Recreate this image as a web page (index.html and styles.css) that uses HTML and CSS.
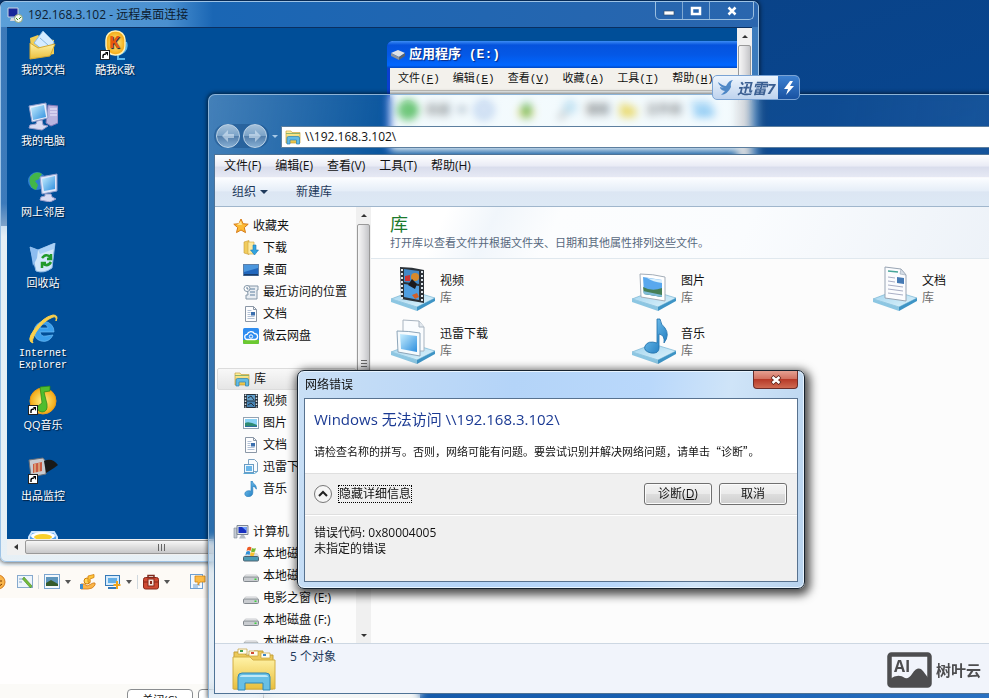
FILE: index.html
```html
<!DOCTYPE html>
<html lang="zh-CN">

<head>
    <meta charset="UTF-8">
    <meta name="viewport" content="width=device-width, initial-scale=1.0">
    <title>网络错误</title>
    <link rel="stylesheet" href="styles.css">
</head>

<body>
    <!-- 图标 -->
    <svg class="defs" aria-hidden="true">
        <defs>
            <linearGradient id="g-glass" x1="0" y1="0" x2="1" y2="1">
                <stop offset="0" stop-color="#c8efff" />
                <stop offset="1" stop-color="#2d8ede" />
            </linearGradient>
            <linearGradient id="g-folder" x1="0" y1="0" x2="0" y2="1">
                <stop offset="0" stop-color="#fff3a8" />
                <stop offset="1" stop-color="#e9bf3d" />
            </linearGradient>
            <linearGradient id="g-stand" x1="0" y1="0" x2="1" y2="1">
                <stop offset="0" stop-color="#9fd3ee" />
                <stop offset="1" stop-color="#dff3fb" />
            </linearGradient>
            <linearGradient id="g-note" x1="0" y1="0" x2="1" y2="1">
                <stop offset="0" stop-color="#8ad4fa" />
                <stop offset="1" stop-color="#1270b8" />
            </linearGradient>
            <radialGradient id="g-gold">
                <stop offset="0" stop-color="#fff38a" />
                <stop offset="1" stop-color="#f3a813" />
            </radialGradient>
        </defs>
        <symbol id="shortcut" viewBox="0 0 10 10">
            <rect x=".5" y=".5" width="9" height="9" fill="#fff" stroke="#222" />
            <path d="M3 8V6q0-2 3-2" fill="none" stroke="#000" stroke-width="1.4" />
            <path d="M5 2h3v4z" />
        </symbol>
        <symbol id="star" viewBox="0 0 16 16">
            <path d="M8 1l2.1 4.7 5.1.5-3.9 3.4 1.2 5L8 12l-4.5 2.6 1.2-5L.8 6.2l5.1-.5z" fill="#fdbb35" stroke="#d67a16" />
            <path d="M8 3l1 4-5 0z" fill="#ffe28a" />
        </symbol>
        <symbol id="download" viewBox="0 0 16 16">
            <path d="M1 2l5-1.500v14L1 13z" fill="#f1cc5d" stroke="#c89b35" stroke-width=".6" />
            <path d="M5 2h6v12H5z" fill="#fdeaa0" stroke="#d0a43a" stroke-width=".6" />
            <path d="M10 5h3v5h2.500L11.500 15 7.500 10H10z" fill="#31a3df" stroke="#1b78b5" stroke-width=".6" />
        </symbol>
        <symbol id="desktop" viewBox="0 0 16 16">
            <rect x=".5" y="2.500" width="15" height="11" fill="#2167bd" stroke="#5c7fa8" />
            <path d="M1 3h14v3L1 10z" fill="#4b96dd" />
            <rect x="1" y="12" width="14" height="1.500" fill="#173d6d" />
        </symbol>
        <symbol id="recent" viewBox="0 0 16 16">
            <path d="M4 2h11v4h-1v9H3v-4h2z" fill="#e8edf2" stroke="#8597a8" />
            <path d="M7 5h5M7 8h5M7 11h5" stroke="#5c7f9e" />
            <circle cx="4" cy="4.500" r="3" fill="#fff" stroke="#8597a8" />
            <path d="M4 3v2h1.500" fill="none" stroke="#3d5f80" stroke-width=".8" />
        </symbol>
        <symbol id="doc" viewBox="0 0 16 16">
            <path d="M2.500.500h8l3 3v12h-11z" fill="#fdfdfe" stroke="#8b97a6" />
            <path d="M10.500.500v3h3" fill="none" stroke="#8b97a6" />
            <path d="M4.500 4.500h4M4.500 6.500h3M4.500 8.500h3M4.500 10.500h7M4.500 12.500h7" stroke="#b3c2d6" />
            <rect x="8" y="6" width="4" height="3.500" fill="#3b6fae" />
        </symbol>
        <symbol id="cloud" viewBox="0 0 16 16">
            <rect width="16" height="16" rx="1.500" fill="#2f8df0" />
            <path d="M0 12h16v2.500a1.500 1.500 0 0 1-1.500 1.500h-13A1.500 1.500 0 0 1 0 14.500z" fill="#6cc931" />
            <path d="M4.500 11.500a2.600 2.600 0 0 1-.3-5.200 4 4 0 0 1 7.300-.6 2.900 2.900 0 0 1 .3 5.800z" fill="none" stroke="#fff" stroke-width="1.300" />
            <circle cx="8" cy="8.500" r="1.700" fill="none" stroke="#fff" />
        </symbol>
        <symbol id="library" viewBox="0 0 16 16">
            <path d="M1 2h5l1 1.500h8V14H1z" fill="url(#g-folder)" stroke="#c9a23b" stroke-width=".7" />
            <path d="M1 4.500h14" stroke="#8fb36b" />
            <path d="M2 15V9q0-1.500 1.500-1.500h9.500q1.500 0 1.500 1.500v6h-3v-4H5v4z" fill="#62bbe5" stroke="#2b82b4" stroke-width=".7" />
        </symbol>
        <symbol id="film" viewBox="0 0 16 16">
            <rect x="1" y="1" width="14" height="14" fill="#26323d" />
            <rect x="4" y="2" width="8" height="5.500" fill="#5f9ecb" />
            <rect x="4" y="8.500" width="8" height="5.500" fill="#4683b3" />
            <path d="M2.500 1.500v13M13.500 1.500v13" stroke="#d8e1e8" stroke-width="1.500" stroke-dasharray="1.500 1.500" />
            <path d="M5 5l3-2 3 4M5 12l3-2 3 3" stroke="#26323d" fill="none" />
        </symbol>
        <symbol id="picture" viewBox="0 0 16 16">
            <rect x=".5" y="2.500" width="15" height="11" fill="#fff" stroke="#93a3b3" />
            <rect x="2" y="4" width="12" height="8" fill="#8ad2f5" />
            <path d="M2 8q4-2 12 2v2H2z" fill="#2f8b73" />
            <path d="M2 11h12v1H2z" fill="#2f6ca0" />
        </symbol>
        <symbol id="xunlei" viewBox="0 0 16 16">
            <path d="M5.500.500h6l3 3v9h-9z" fill="#f7fbfe" stroke="#7ea3c2" />
            <rect x="1.500" y="5.500" width="9" height="8" fill="#eef8fe" stroke="#6a9cc4" />
            <rect x="3" y="7" width="6" height="5" fill="#6ab6ea" />
            <path d="M.5 14.500h11l3-2" fill="none" stroke="#5caad6" />
        </symbol>
        <symbol id="music" viewBox="0 0 16 16">
            <path d="M8 0h1.300c.3 2.700 4.700 3.600 4 8.200-.7-2-2.200-2.700-3.500-2.800v6.300c0 5-7.800 5.100-8 1.400C1.700 10 5.500 9 8 10.200z" fill="url(#g-note)" stroke="#2279bb" stroke-width=".6" />
        </symbol>
        <symbol id="pc" viewBox="0 0 16 16">
            <path d="M1 4h3v10H1z" fill="#c5cbd3" stroke="#7d8794" stroke-width=".6" />
            <path d="M4 1.500h11v9H4z" fill="#dfe4ea" stroke="#7d8794" />
            <path d="M5.500 3h8v6h-8z" fill="#1931c0" />
            <path d="M9 3h4.500v4z" fill="#6ea0ff" />
            <path d="M8 11h3l2 3.500H6z" fill="#b4bcc6" />
        </symbol>
        <symbol id="disk" viewBox="0 0 16 16">
            <path d="M2.500 7h11l2 2.500h-15z" fill="#f2f3f4" stroke="#a9adb2" stroke-width=".6" />
            <rect x=".5" y="9" width="15" height="4.500" rx="1" fill="#c9ccd0" stroke="#82888e" />
            <rect x="11.500" y="10.500" width="2" height="1.500" fill="#3ccf3c" />
        </symbol>
        <symbol id="sysdisk" viewBox="0 0 16 16">
            <rect x=".5" y="10.500" width="15" height="4.500" rx="1" fill="#4c9bb5" stroke="#4c6270" />
            <path d="M1 10l3-3h10l2 3z" fill="#d6dadd" />
            <path d="M4.500 1.500q2-1.500 4 0l-1 3.500q-2-1.300-4 0z" fill="#ee5a24" />
            <path d="M9 2q2 1 4 0l-1 3.500q-2 1-4 0z" fill="#79b72e" />
            <path d="M3.300 5.700q2-1.300 4 0L6.500 9q-2-1.300-4 0z" fill="#2f90d8" />
            <path d="M7.800 6q2 1 4 0L11 9.500q-2 1-4 0z" fill="#fbc02d" />
        </symbol>
        <symbol id="stand" viewBox="0 0 46 46">
            <path d="M1 34l21-8 23 7-18 9z" fill="url(#g-stand)" stroke="#79b5d3" stroke-width=".7" />
            <path d="M1 34l26 8v4L1 37z" fill="#8cc6e2" />
            <path d="M27 42l18-9v3l-18 10z" fill="#3e94c5" />
        </symbol>
    </svg>

    <div class="desktop">
        <!-- 聊天窗口 -->
        <section class="chat">
            <div class="chat-tools">
                <svg class="i16 cut" viewBox="0 0 16 16"><circle cx="7" cy="8" r="7" fill="#f8b44a" stroke="#d47a1a" /><path d="M7 6v2M10 6v2M6 11q3 2 5-1" stroke="#7c3b00" fill="none" /></svg>
                <svg class="i16" viewBox="0 0 16 16"><rect x=".5" y="1.500" width="15" height="12" fill="#eef5fb" stroke="#86a9cd" /><path d="M2 5h4M2 8h3" stroke="#86a9cd" /><path d="M7 3l8 9-1.500 2L5.500 5z" fill="#73bd3b" stroke="#437f22" stroke-width=".6" /></svg>
                <i class="sep"></i>
                <svg class="i16" viewBox="0 0 16 16"><rect x=".5" y=".5" width="15" height="14" fill="#f3f8fd" stroke="#7ba5cf" /><rect x="2" y="3" width="12" height="9" fill="#5d95bc" /><path d="M2 9l5-3 7 4v2H2z" fill="#355c2c" /></svg>
                <i class="caret"></i>
                <svg class="i16 wide" viewBox="0 0 16 16"><circle cx="7" cy="7" r="3" fill="#ffd65a" stroke="#d07f0c" /><path d="M8 8V2l6-1.500v3L10 5v4z" fill="#ffc53b" stroke="#d07f0c" stroke-width=".8" /><path d="M1 10q4-1 6 2l6-3q3-1 2 2-2 4-7 4H1z" fill="#fbb548" stroke="#cf7a16" stroke-width=".8" /><path d="M0 10h3v5H0z" fill="#3b8bd0" /></svg>
                <svg class="i16" viewBox="0 0 16 16"><rect x=".5" y="1.500" width="14" height="10" fill="#d7ebfb" stroke="#3579b8" /><rect x="3" y="4" width="9" height="5" fill="#63aee6" /><path d="M3 14h8" stroke="#3579b8" stroke-width="2" /><path d="M12 7v8M8.500 11h7" stroke="#f0a51c" stroke-width="2" /></svg>
                <i class="caret"></i>
                <i class="sep"></i>
                <svg class="i16" viewBox="0 0 16 16"><path d="M5 4V1.500h6V4" fill="none" stroke="#7c2a1d" stroke-width="1.500" /><rect x=".5" y="3.500" width="15" height="11.500" rx="2" fill="#cf4a33" stroke="#87281a" /><path d="M1 8h14" stroke="#87281a" /><rect x="5" y="5" width="6" height="7" fill="#f4e3db" stroke="#87281a" /><rect x="7" y="7" width="2" height="3" fill="#87281a" /></svg>
                <i class="caret"></i>
                <svg class="i16 far" viewBox="0 0 16 16"><rect x=".5" y=".5" width="12" height="14" fill="#f3f8fd" stroke="#6ea0d3" /><path d="M3 11h7M3 13h5" stroke="#6ea0d3" /><path d="M5 2h10v6h-5l-2 3V8H5z" fill="#fdbb45" stroke="#cf8518" stroke-width=".8" /></svg>
            </div>
            <div class="chat-input"></div>
            <div class="chat-foot">
                <button class="chat-btn">关闭(C)</button>
                <button class="chat-btn" aria-label="发送"></button>
            </div>
        </section>

        <!-- 远程桌面 -->
        <section class="remote">
            <header class="remote-title">
                <svg class="i16" viewBox="0 0 16 16"><path d="M1 1h10v9H1z" fill="#16279a" stroke="#c9d4e3" /><path d="M4 11h5l1 3H3z" fill="#cfd6df" /><circle cx="11.500" cy="11.500" r="4" fill="#f3f8ee" stroke="#8aa37a" /><path d="M9 11l2 2M14 10l-2 2" stroke="#3c8c20" /></svg>
                <h1>192.168.3.102 - 远程桌面连接</h1>
                <div class="caption">
                    <button aria-label="最小化"><svg viewBox="0 0 12 12"><rect x="1" y="6" width="10" height="4" fill="#fff" stroke="#35506f" stroke-width=".7" /></svg></button>
                    <button aria-label="最大化"><svg viewBox="0 0 12 12"><rect x="2" y="3" width="8" height="6" fill="none" stroke="#fff" stroke-width="2.500" /></svg></button>
                    <button class="x" aria-label="关闭"><svg viewBox="0 0 12 12"><path d="M2.500 2.500l7 7M9.500 2.500l-7 7" stroke="#fff" stroke-width="2.500" /></svg></button>
                </div>
            </header>
            <div class="remote-body">
                <div class="screen">
                    <ul class="icons">
                        <li>
                            <svg viewBox="0 0 30 30"><path d="M2 8l8-3 3 3 13 2v14L4 29z" fill="#f2cf55" /><path d="M6 13L15 1l11 11-6 12z" fill="#d5ecff" stroke="#8ab8e0" /><path d="M12 8l8 7" stroke="#8ab8e0" /><path d="M2 29V13l8 5 17-4-5 12z" fill="url(#g-folder)" stroke="#d3a933" /></svg>
                            <span>我的文档</span>
                        </li>
                        <li>
                            <svg viewBox="0 0 30 30"><path d="M20 4l10 1v17l-7 3-5-3z" fill="#b9b4df" stroke="#8178b8" /><path d="M22 8h7M22 11h7M22 14h7" stroke="#eef" /><path d="M1 5l17-3 2 15-16 4z" fill="#e7ecfb" stroke="#8e9dcb" /><path d="M3 7l13-3 2 12-13 3z" fill="url(#g-glass)" /><path d="M9 20l5-1 1 5 5 1-6 4-13-2 1-3 6-1z" fill="#d9dbf3" stroke="#9a9ecc" /></svg>
                            <span>我的电脑</span>
                        </li>
                        <li>
                            <svg viewBox="0 0 30 30"><circle cx="9" cy="9" r="9" fill="#2f7fd0" /><path d="M2 5q6-7 12-3l-3 5-4 2 3 4-2 5Q0 15 2 5z" fill="#42b649" /><path d="M12 5l17-3v17l-15 3z" fill="#dfe6fa" stroke="#8e9dcb" /><path d="M14 7l13-3v13l-11 2z" fill="url(#g-glass)" /><path d="M17 22h6l1 3 4 2-6 3-10-2 1-3 4-1z" fill="#d9dbf3" stroke="#9a9ecc" /></svg>
                            <span>网上邻居</span>
                        </li>
                        <li>
                            <svg viewBox="0 0 30 30"><path d="M2 4l8 3 17-7-3 25q-8 6-16 3z" fill="#d2e8fb" stroke="#8fb9e4" /><path d="M2 4l8 3-1 8-4 8z" fill="#8dbdf0" /><path d="M10 7l17-7-1 6-14 5z" fill="#a9d0f7" /><path d="M14 15q4-5 8-1M23 11v5h-4M23 19q-3 5-8 2M14 25v-5h4" fill="none" stroke="#219a2a" stroke-width="2.500" /></svg>
                            <span>回收站</span>
                        </li>
                        <li>
                            <svg viewBox="0 0 30 30"><path d="M6 17A10 10 0 1 1 26 18H12q1 5 6 4l7-1q-4 8-12 6-7-2-7-10zM12 14h8q-1-4-4-4t-4 4z" fill="#3b9fec" stroke="#6bbcf7" stroke-width=".7" fill-rule="evenodd" /><path d="M5 29Q-2 27 6 16 15 3 25 1q6 0 3 6 1-5-3-4Q15 7 8 18q-5 9-3 11z" fill="#fbd04c" stroke="#fbd04c" stroke-width="1" /></svg>
                            <span class="en">Internet Explorer</span>
                        </li>
                        <li>
                            <svg viewBox="0 0 30 30"><circle cx="15" cy="16" r="13" fill="url(#g-gold)" stroke="#eb9b1a" /><path d="M12 2l10-1v5l-6 1 3 12q1 8-5 8-6-1-4-6l4-3z" fill="#4fbd2f" stroke="#278416" stroke-width=".7" /><use href="#shortcut" x="0" y="20" width="10" height="10" /></svg>
                            <span>QQ音乐</span>
                        </li>
                        <li>
                            <svg viewBox="0 0 30 30"><path d="M1 4l14-2 3 4v12l-15 3z" fill="#c9cbd0" stroke="#6d7178" /><path d="M5 8l9-2v9l-9 2z" fill="#c95b42" /><path d="M7 8v9M11 7v9" stroke="#ebd7a3" /><path d="M16 5q8-4 14 4l-4 3-8 5z" fill="#191919" /><use href="#shortcut" x="0" y="18" width="10" height="10" /></svg>
                            <span>出品监控</span>
                        </li>
                        <li>
                            <svg viewBox="0 0 30 30"><path d="M1 10l3-5h22l3 5v20H1z" fill="#4fa0f0" stroke="#c9e4ff" stroke-width="2" /><ellipse cx="15" cy="9" rx="12" ry="4" fill="#fff" /><ellipse cx="15" cy="10" rx="9" ry="3" fill="#f7cf2d" /></svg>
                        </li>
                    </ul>
                    <ul class="icons">
                        <li>
                            <svg viewBox="0 0 30 30"><path d="M26 12q3 9-8 13v4h7" fill="none" stroke="#58b7ef" stroke-width="2" /><rect x="6" y="1" width="19" height="24" rx="9" fill="url(#g-gold)" stroke="#fff1b5" stroke-width="1.500" /><text x="9" y="18" class="k">K</text><use href="#shortcut" x="0" y="20" width="10" height="10" /></svg>
                            <span>酷我K歌</span>
                        </li>
                    </ul>
                    <div class="xp">
                        <div class="xp-title">
                            <svg class="i16" viewBox="0 0 16 16"><path d="M1 6l7-3 7 3-6 4z" fill="#dfe3e6" /><path d="M1 6l8 4v3L1 9z" fill="#8b9299" /><path d="M9 10l6-4v3l-6 4z" fill="#5c646b" /></svg>
                            <h2>应用程序 (E:)</h2>
                        </div>
                        <nav class="xp-menu">
                            <span>文件(<u>F</u>)</span>
                            <span>编辑(<u>E</u>)</span>
                            <span>查看(<u>V</u>)</span>
                            <span>收藏(<u>A</u>)</span>
                            <span>工具(<u>T</u>)</span>
                            <span>帮助(<u>H</u>)</span>
                        </nav>
                        <div class="xp-tools">
                            <svg class="i20" viewBox="0 0 20 20"><circle cx="10" cy="10" r="10" fill="#46b94c" /><path d="M12 5l-5 5 5 5" fill="none" stroke="#fff" stroke-width="2" /></svg>
                            <span>后退</span>
                            <i class="caret"></i>
                            <svg class="i20" viewBox="0 0 20 20"><circle cx="10" cy="10" r="8" fill="#e9f1fb" stroke="#a5c0e8" stroke-width="3" /></svg>
                            <svg class="i20 up-folder" viewBox="0 0 20 20"><path d="M3 8h14v9H3z" fill="#e5d86a" /><path d="M8 18V9H5l6-7 5 7h-3v9z" fill="#4fae42" /></svg>
                            <svg class="i20" viewBox="0 0 20 20"><circle cx="12" cy="7" r="6" fill="#c8e8f7" stroke="#9ccbe2" /><path d="M8 11l-7 8" stroke="#888" stroke-width="2" /></svg>
                            <span>搜索</span>
                            <svg class="i20" viewBox="0 0 20 20"><path d="M2 4h7l2 3h7v10H2z" fill="#f1dc62" /></svg>
                            <span>文件夹</span>
                            <svg class="i26" viewBox="0 0 26 20"><path d="M1 2h20v4H1zM4 8h20v9H4z" fill="#8ecbf5" /></svg>
                        </div>
                    </div>
                </div>
                <div class="vscroll"><i class="up"></i><b></b></div>
            </div>
            <div class="hscroll"><i class="left"></i><b><em></em></b></div>
        </section>

        <!-- 资源管理器 -->
        <section class="explorer">
            <div class="address">
                <div class="nav-btns">
                    <button aria-label="后退"><svg viewBox="0 0 22 22"><path d="M11 5l-6 6 6 6v-4h6V9h-6z" fill="#d9e8f5" opacity=".6" /></svg></button>
                    <button aria-label="前进"><svg viewBox="0 0 22 22"><path d="M11 5l6 6-6 6v-4H5V9h6z" fill="#d9e8f5" opacity=".6" /></svg></button>
                </div>
                <i class="caret light"></i>
                <div class="addr-box">
                    <svg class="i16"><use href="#library" /></svg>
                    <input type="text" aria-label="地址" value="\\192.168.3.102\">
                </div>
            </div>
            <div class="client">
                <nav class="menu">
                    <a href="#">文件(F)</a>
                    <a href="#">编辑(E)</a>
                    <a href="#">查看(V)</a>
                    <a href="#">工具(T)</a>
                    <a href="#">帮助(H)</a>
                </nav>
                <div class="toolbar">
                    <button>组织<i class="caret"></i></button>
                    <button>新建库</button>
                </div>
                <div class="panes">
                    <div class="tree">
                        <ul>
                            <li class="root"><svg class="i16"><use href="#star" /></svg><a href="#">收藏夹</a></li>
                            <li><svg class="i16"><use href="#download" /></svg><a href="#">下载</a></li>
                            <li><svg class="i16"><use href="#desktop" /></svg><a href="#">桌面</a></li>
                            <li><svg class="i16"><use href="#recent" /></svg><a href="#">最近访问的位置</a></li>
                            <li><svg class="i16"><use href="#doc" /></svg><a href="#">文档</a></li>
                            <li><svg class="i16"><use href="#cloud" /></svg><a href="#">微云网盘</a></li>
                        </ul>
                        <ul>
                            <li class="root selected"><svg class="i16"><use href="#library" /></svg><a href="#">库</a></li>
                            <li><svg class="i16"><use href="#film" /></svg><a href="#">视频</a></li>
                            <li><svg class="i16"><use href="#picture" /></svg><a href="#">图片</a></li>
                            <li><svg class="i16"><use href="#doc" /></svg><a href="#">文档</a></li>
                            <li><svg class="i16"><use href="#xunlei" /></svg><a href="#">迅雷下载</a></li>
                            <li><svg class="i16"><use href="#music" /></svg><a href="#">音乐</a></li>
                        </ul>
                        <ul>
                            <li class="root"><svg class="i16"><use href="#pc" /></svg><a href="#">计算机</a></li>
                            <li><svg class="i16"><use href="#sysdisk" /></svg><a href="#">本地磁盘 (C:)</a></li>
                            <li><svg class="i16"><use href="#disk" /></svg><a href="#">本地磁盘 (D:)</a></li>
                            <li><svg class="i16"><use href="#disk" /></svg><a href="#">电影之窗 (E:)</a></li>
                            <li><svg class="i16"><use href="#disk" /></svg><a href="#">本地磁盘 (F:)</a></li>
                            <li><svg class="i16"><use href="#disk" /></svg><a href="#">本地磁盘 (G:)</a></li>
                        </ul>
                    </div>
                    <div class="vscroll tree-scroll"><i class="up"></i><b><em></em></b><i class="down"></i></div>
                    <div class="content">
                        <header class="content-head">
                            <h2>库</h2>
                            <p>打开库以查看文件并根据文件夹、日期和其他属性排列这些文件。</p>
                        </header>
                        <div class="tiles">
                            <div class="tile">
                                <svg viewBox="0 0 46 46"><use href="#stand" /><path d="M10 2q12 0 24 3v33L11 34z" fill="#2c3238" /><path d="M14 4l15 2v13l-15-2z" fill="#4389c7" /><path d="M14 19l15 2v14l-15-3z" fill="#4f9ee0" /><path d="M15 11l5-1v6h-5z" fill="#cc3434" /><circle cx="25" cy="12" r="4" fill="#d68a2c" /><path d="M18 20l4-6 5 5-2 5z" fill="#1b1a1e" /><path d="M22 30l5-2 2 4-4 2z" fill="#d0602a" /><path d="M12 4v30M32 6v32" stroke="#dfe8ee" stroke-width="2" stroke-dasharray="2 2" /></svg>
                                <div><strong>视频</strong><span>库</span></div>
                            </div>
                            <div class="tile">
                                <svg viewBox="0 0 46 46"><use href="#stand" /><path d="M9 9q13 0 25 3v24L10 32z" fill="#fff" stroke="#a3adb8" /><path d="M12 12l19 3v17l-18-3z" fill="#59a8ee" /><path d="M16 13q6 4 15 5v-3z" fill="#d7effd" /><path d="M12 22q9 5 19 1v9l-18-3z" fill="#467f55" /><path d="M12 26l19 4v2l-18-3z" fill="#80bcd8" /></svg>
                                <div><strong>图片</strong><span>库</span></div>
                            </div>
                            <div class="tile">
                                <svg viewBox="0 0 46 46"><use href="#stand" /><path d="M13 2l16 2 5 6v26l-21-3z" fill="#fbfcfe" stroke="#98a4b3" /><path d="M29 4l-1 5 6 1z" fill="#d5dde6" stroke="#98a4b3" stroke-width=".6" /><path d="M16 6l10 1" stroke="#48a69a" stroke-width="1.500" /><path d="M16 12l7 1M16 16l7 1M16 20l15 2M16 24l15 2M16 28l15 2" stroke="#a8aec5" /><path d="M25 12l7 1v6l-7-1z" fill="#4479b4" /></svg>
                                <div><strong>文档</strong><span>库</span></div>
                            </div>
                            <div class="tile">
                                <svg viewBox="0 0 46 46"><use href="#stand" /><path d="M13 2l16 1 5 6v24H13z" fill="#fafcfe" stroke="#a8b4c0" /><path d="M29 3v6h5" fill="#e2e8ee" stroke="#a8b4c0" /><path d="M7 13q12 0 23 2v23L8 34z" fill="#f5fafd" stroke="#8da5b9" /><path d="M10 16l17 2v16l-16-3z" fill="url(#g-glass)" /></svg>
                                <div><strong>迅雷下载</strong><span>库</span></div>
                            </div>
                            <div class="tile">
                                <svg viewBox="0 0 46 46"><use href="#stand" /><path d="M26 1h3q1 6 5 9 5 7-1 15 1-8-5-9v14q0 6-8 5-8-2-6-7 3-6 12-3z" fill="url(#g-note)" stroke="#1f70aa" stroke-width=".8" /></svg>
                                <div><strong>音乐</strong><span>库</span></div>
                            </div>
                        </div>
                    </div>
                </div>
                <footer class="status">
                    <svg viewBox="0 0 44 44"><path d="M2 5h10l2 3h8V4h9v4h10v34H2z" fill="#ecc95a" stroke="#c39e36" /><path d="M6 2h9v5H6zM17 4h9v5h-9zM29 6h9v5h-9z" fill="#fffdf0" stroke="#c39e36" stroke-width=".7" /><path d="M8 4h3" stroke="#3b9f50" stroke-width="2" /><path d="M19 6h3" stroke="#d24932" stroke-width="2" /><path d="M31 8h3" stroke="#3d86c9" stroke-width="2" /><path d="M1 10h17l3 3h22v29H1z" fill="url(#g-folder)" stroke="#d2ae43" /><path d="M6 43V30q0-4 4-4h24q4 0 4 4v13h-7v-7H13v7z" fill="#68bfe5" stroke="#3187b5" /><path d="M8 30q0-2 3-2h22q3 0 3 2z" fill="#bfe8f8" /></svg>
                    <p>5 个对象</p>
                </footer>
            </div>
        </section>

        <!-- 迅雷悬浮条 -->
        <div class="thunder">
            <svg class="bird" viewBox="0 0 18 18"><path d="M1 3q5 4 8 4 3-6 7-6-3 3-2 7-3 7-10 8l4-4Q3 11 3 8l4 1Q2 7 1 3z" fill="#4d87c6" /></svg>
            <span>迅雷7</span>
            <button aria-label="迅雷"><svg viewBox="0 0 14 16"><path d="M8 1L2 9h4l-2 6 8-9H8l3-5z" fill="#fff" /></svg></button>
        </div>

        <!-- 错误对话框 -->
        <section class="dialog" role="dialog" aria-labelledby="dlg-title">
            <header class="dialog-title">
                <h2 id="dlg-title">网络错误</h2>
                <button class="close" aria-label="关闭"><svg viewBox="0 0 12 12"><path d="M2 2.500l8 7M10 2.500l-8 7" stroke="#5d2019" stroke-width="4" /><path d="M2.500 3l7 6M9.500 3l-7 6" stroke="#fff" stroke-width="2.500" /></svg></button>
            </header>
            <div class="dialog-body">
                <div class="message">
                    <h3>Windows 无法访问 \\192.168.3.102\</h3>
                    <p>请检查名称的拼写。否则，网络可能有问题。要尝试识别并解决网络问题，请单击“诊断”。</p>
                </div>
                <div class="actions">
                    <button class="toggle">
                        <svg viewBox="0 0 20 20"><circle cx="10" cy="10" r="8.500" fill="#f6f6f6" stroke="#777" /><path d="M6 12l4-4 4 4" fill="none" stroke="#222" stroke-width="2" /></svg>
                        <span>隐藏详细信息</span>
                    </button>
                    <button class="btn">诊断(<u>D</u>)</button>
                    <button class="btn">取消</button>
                </div>
                <div class="details">
                    <p>错误代码: 0x80004005</p>
                    <p>未指定的错误</p>
                </div>
            </div>
        </section>

        <div class="mark">
            <svg viewBox="0 0 46 36"><rect x="2.500" y="2.500" width="40" height="31" rx="2" fill="none" stroke="#4d4d4f" stroke-width="4.500" /><path d="M3 27q8-6 15-1 4 1 7-4 6-9 11-3l6 8v7H3z" fill="#4d4d4f" /><text x="7" y="20" class="ai">AI</text></svg>
            <span>树叶云</span>
        </div>
    </div>
</body>

</html>
```

FILE: styles.css
```css
* {
    margin: 0;
    padding: 0;
    box-sizing: border-box;
}

body {
    font: 12px/16px "Open Sans", "Noto Sans CJK SC", sans-serif;
    color: #111;
}

ul {
    list-style: none;
}

a {
    color: inherit;
    text-decoration: none;
}

button,
input {
    font: inherit;
    color: inherit;
    border: 0;
    background: none;
}

h1,
h2,
h3 {
    font-weight: normal;
    font-size: 12px;
}

svg {
    display: block;
    flex: none;
}

.defs {
    position: absolute;
    width: 0;
    height: 0;
}

.i16 {
    width: 16px;
    height: 16px;
}

.i20 {
    width: 20px;
    height: 20px;
}

.i26 {
    width: 26px;
    height: 20px;
}

.caret {
    border: 4px solid transparent;
    border-top-color: #1e395b;
    border-bottom: 0;
}

.caret.light {
    border-width: 3px 3px 0;
    border-top-color: #a9c9e6;
}

.desktop {
    position: relative;
    height: 100vh;
    overflow: hidden;
    background: linear-gradient(160deg, #0c3f80 0, #064894 60%, #1a63ba 100%);
}

/* 聊天窗口 */
.chat {
    position: absolute;
    left: 0;
    top: 226px;
    bottom: 0;
    width: 420px;
    display: flex;
    flex-direction: column;
    background: #f4fbff;
}

.chat-tools {
    display: flex;
    align-items: center;
    height: 32px;
    margin-top: 340px;
    gap: 5px;
    background: #fdfaf6;
}

.chat-tools .caret {
    border-width: 4px 3px 0;
    border-top-color: #555;
}

.cut {
    margin-left: -9px;
    margin-right: 5px;
}

.wide {
    margin: 0 4px;
}

.far {
    margin-left: 15px;
}

.sep {
    width: 1px;
    height: 14px;
    background: #d0d8de;
}

.chat-input {
    flex: 1;
    background: #fffefe;
}

.chat-foot {
    display: flex;
    gap: 5px;
    height: 14px;
    padding: 5px 0 0 127px;
    background: #fbfaf7;
}

.chat-btn {
    flex: none;
    width: 66px;
    height: 22px;
    font-size: 11px;
    line-height: 14px;
    border: 1px solid #8a8d90;
    border-radius: 4px;
    background: #fff;
}

/* 远程桌面 */
.remote {
    position: absolute;
    left: 0;
    top: 1px;
    width: 759px;
    height: 561px;
    display: flex;
    flex-direction: column;
    padding: 0 6px 6px;
    border: 1px solid #9dc3e6;
    border-radius: 6px;
    background: linear-gradient(rgba(93, 160, 222, .6) 0, rgba(93, 160, 222, .6) 36%, rgba(225, 235, 242, .7) 42%);
    box-shadow: 0 0 4px 1px rgba(0, 0, 0, .6);
}

.remote-title {
    display: flex;
    align-items: center;
    gap: 5px;
    height: 25px;
    background: linear-gradient(90deg, #5b9fd8 0, #4a90d0 22%, #1a66b4 28%, #2a66ae 100%);
    margin: 0 -6px;
    padding: 0 4px 0 6px;
    border-radius: 5px 5px 0 0;
}

.remote-title h1 {
    flex: 1;
    color: #0c1c30;
}

.caption {
    display: flex;
    align-self: flex-start;
    border: 1px solid #9bbfe0;
    border-top: 0;
    border-radius: 0 0 5px 5px;
}

.caption button {
    width: 27px;
    height: 17px;
    display: flex;
    align-items: center;
    justify-content: center;
    border-right: 1px solid #7fa9d2;
}

.caption .x {
    width: 43px;
    border-right: 0;
}

.caption svg {
    width: 12px;
    height: 12px;
}

.remote-body {
    flex: 1;
    display: flex;
    min-height: 0;
    border-top: 1px solid #0a2f60;
}

.screen {
    flex: 1;
    display: flex;
    overflow: hidden;
    background: #004e98;
}

.icons {
    flex: none;
    width: 72px;
}

.icons li {
    display: flex;
    flex-direction: column;
    align-items: center;
    gap: 4px;
    height: 71px;
    padding-top: 2px;
    font-size: 11px;
    line-height: 12px;
    color: #fff;
    text-align: center;
    text-shadow: 1px 1px 1px #001c3c;
}

.icons svg {
    width: 30px;
    height: 30px;
}

.icons .en {
    width: 56px;
    font-family: "Liberation Mono", monospace;
    font-size: 10px;
}

.k {
    font: bold 16px "Open Sans", sans-serif;
    fill: #e8590c;
}

/* 远程里的 XP 窗口 */
.xp {
    flex: 1;
    margin: 13px 0 0 236px;
    border-left: 3px solid #0a3fd0;
    border-radius: 6px 0 0 0;
    background: #fbffff;
    height: 110px;
}

.xp-title {
    display: flex;
    align-items: center;
    gap: 3px;
    height: 27px;
    margin-left: -3px;
    padding-left: 3px;
    border-radius: 6px 0 0 0;
    background: linear-gradient(#3c8cf5 0, #0553dd 15%, #0458e6 50%, #0066ff 90%, #0047c4 100%);
}

.xp-title h2 {
    color: #fff;
    font: bold 13px/16px "Liberation Mono", "Noto Sans CJK SC", monospace;
    text-shadow: 1px 1px 1px #0a2a80;
}

.xp-menu {
    display: flex;
    gap: 13px;
    height: 23px;
    padding-left: 8px;
    align-items: center;
    background: #f3f1ec;
    border-bottom: 1px solid #c4c2bc;
    font: 11px/14px "Liberation Mono", "Noto Sans CJK SC", monospace;
    white-space: nowrap;
}

.xp-tools {
    display: flex;
    align-items: center;
    gap: 8px;
    height: 38px;
    padding-left: 8px;
    color: #444;
    white-space: nowrap;
}

.xp-tools .up-folder {
    margin: 0 14px;
}

/* 滚动条 */
.vscroll {
    width: 15px;
    display: flex;
    flex-direction: column;
    align-items: center;
    background: #f0f0f0;
}

.vscroll b,
.hscroll b {
    border: 1px solid #999;
    border-radius: 2px;
    display: flex;
    align-items: center;
    justify-content: center;
}

.vscroll b {
    flex: 1;
    width: 13px;
    background: linear-gradient(90deg, #f6f6f6, #e0e0e2 50%, #c4c5c8);
}

.up,
.down {
    border: 3px solid transparent;
}

.vscroll .up {
    border-bottom-color: #333;
    border-top: 0;
    margin: 7px 0;
}

.vscroll .down {
    border-top-color: #333;
    border-bottom: 0;
    margin: 7px 0;
}

.hscroll {
    display: flex;
    align-items: center;
    height: 16px;
    background: #f0f0f0;
}

.hscroll .left {
    border: 3px solid transparent;
    border-right: 4px solid #333;
    border-left: 0;
    margin: 0 7px;
}

.hscroll b {
    width: 274px;
    height: 14px;
    background: linear-gradient(#f6f6f6, #dedede 50%, #c8c8ca);
}

.hscroll em {
    width: 8px;
    height: 7px;
    background: repeating-linear-gradient(90deg, #666 0 1px, transparent 1px 3px);
}

/* 资源管理器 */
.explorer {
    position: absolute;
    left: 208px;
    top: 94px;
    right: 0;
    bottom: 0;
    display: flex;
    flex-direction: column;
    padding: 0 0 4px 5px;
    border: solid #8db4d8;
    border-width: 1px 0 0 1px;
    border-radius: 7px 0 0 0;
    background: linear-gradient(100deg, rgba(150, 190, 225, .45) 0, rgba(120, 180, 230, .06) 22%, rgba(120, 180, 230, .06) 70%, rgba(120, 180, 230, .18) 100%);
    backdrop-filter: blur(4px);
    box-shadow: 0 0 4px 1px rgba(0, 0, 0, .6);
}

.address {
    display: flex;
    align-items: flex-end;
    height: 59px;
    padding-bottom: 6px;
    gap: 3px;
}

.nav-btns {
    display: flex;
    gap: 3px;
    padding: 0 2px;
    border-radius: 13px;
    background: rgba(20, 70, 125, .4);
}

.nav-btns button {
    width: 24px;
    height: 24px;
    border: 1px solid #bdd3e6;
    border-radius: 50%;
    background: linear-gradient(#a5c1da 0, #7ba3c8 48%, #547fab 52%, #86aed3 100%);
}

.address .caret {
    margin-bottom: 10px;
}

.addr-box {
    flex: 1;
    display: flex;
    align-items: center;
    gap: 4px;
    height: 22px;
    padding-left: 3px;
    border: solid #5d7f9f;
    border-width: 1px 0 1px 1px;
    background: #fff;
}

.addr-box input {
    flex: 1;
    outline: 0;
}

.client {
    flex: 1;
    display: flex;
    flex-direction: column;
    min-height: 0;
    border: solid #4f7396;
    border-width: 1px 0 1px 1px;
    background: #fcfcfc;
}

.menu {
    display: flex;
    align-items: center;
    gap: 14px;
    height: 22px;
    padding-left: 9px;
    background: linear-gradient(#fff, #e9ebf5 50%, #d9ddec 55%, #e6e9f4);
}

.toolbar {
    display: flex;
    align-items: center;
    gap: 28px;
    height: 30px;
    padding-left: 17px;
    color: #1e395b;
    background: linear-gradient(#fbfdff, #e6eef8 45%, #dce6f3 50%, #dde9f5);
    border-top: 1px solid #f8f8fb;
    border-bottom: 1px solid #a0b6cc;
}

.toolbar button {
    display: flex;
    align-items: center;
    gap: 4px;
}

.panes {
    flex: 1;
    display: flex;
    min-height: 0;
}

.tree {
    flex: none;
    width: 141px;
    display: flex;
    flex-direction: column;
    gap: 21px;
    padding-top: 8px;
    overflow: hidden;
}

.tree li {
    display: flex;
    align-items: center;
    gap: 4px;
    height: 22px;
    padding-left: 28px;
    white-space: nowrap;
}

.tree .root {
    padding-left: 18px;
}

.tree .selected {
    margin-left: 2px;
    padding-left: 16px;
    border: 1px solid #dcdcdc;
    border-radius: 2px;
    background: linear-gradient(#f8f8f8, #e6e6e6);
}

.tree-scroll b {
    flex: none;
    height: 278px;
}

.vscroll em {
    width: 6px;
    height: 7px;
    background: repeating-linear-gradient(#666 0 1px, transparent 1px 3px);
}

.tree-scroll .down {
    margin-top: auto;
    margin-bottom: 6px;
}

.content {
    flex: 1;
    min-width: 0;
    overflow: hidden;
}

.content-head {
    height: 52px;
    padding: 6px 0 0 19px;
    background: linear-gradient(115deg, #fff 0, #fff 12%, #f1f6fb 20%, #fcfdfe 30%, #fafcfe 60%, #edf2f8 100%);
    border-bottom: 1px solid #e0e8ee;
}

.content-head h2 {
    font-size: 18px;
    line-height: 22px;
    color: #1c7a2c;
}

.content-head p {
    font-size: 11px;
    line-height: 16px;
    color: #56677c;
    white-space: nowrap;
}

.tiles {
    display: grid;
    grid-template-columns: repeat(3, 241px);
    grid-auto-rows: 53px;
    padding: 6px 0 0 19px;
}

.tile {
    display: flex;
    gap: 4px;
}

.tile svg {
    width: 46px;
    height: 46px;
}

.tile div {
    display: flex;
    flex-direction: column;
    padding-top: 7px;
    line-height: 17px;
}

.tile strong {
    font-weight: normal;
}

.tile span {
    color: #6d6d6d;
}

.status {
    display: flex;
    gap: 14px;
    height: 50px;
    padding: 3px 0 0 17px;
    color: #1e395b;
    background: #f1f4fb;
    border-top: 1px solid #cdd7e2;
}

.status svg {
    width: 44px;
    height: 44px;
}

.status p {
    padding-top: 2px;
}

/* 迅雷悬浮条 */
.thunder {
    position: absolute;
    left: 712px;
    top: 75px;
    display: flex;
    align-items: center;
    height: 25px;
    border: 1px solid #7aa3d4;
    border-radius: 5px;
    overflow: hidden;
    background: linear-gradient(#eef5fd, #bed3ee);
    color: #3b5f92;
    font-size: 15px;
    font-style: italic;
    font-weight: bold;
}

.bird {
    width: 18px;
    height: 18px;
    margin: 0 2px 0 4px;
}

.thunder button {
    width: 21px;
    height: 25px;
    margin-left: 3px;
    display: flex;
    align-items: center;
    justify-content: center;
    background: linear-gradient(#3f83d3, #17509f);
}

.thunder button svg {
    width: 14px;
    height: 16px;
}

/* 错误对话框 */
.dialog {
    position: absolute;
    left: 297px;
    top: 370px;
    width: 508px;
    padding: 0 6px 6px;
    border: 1px solid #16222e;
    border-radius: 7px;
    background: linear-gradient(100deg, #c9dff5 0, #b4d4f8 40%, #b9d8fb 65%, #cfe4f8 80%, #b8d3ee 100%);
    box-shadow: inset 0 0 0 1px #e8f4ff, 2px 3px 10px 3px rgba(0, 0, 0, .7);
}

.dialog-title {
    display: flex;
    justify-content: space-between;
    align-items: center;
    height: 27px;
    padding-left: 1px;
}

.close {
    align-self: flex-start;
    width: 45px;
    height: 18px;
    display: flex;
    align-items: center;
    justify-content: center;
    border: 1px solid #6b2d2a;
    border-top: 0;
    border-radius: 0 0 4px 4px;
    background: linear-gradient(#e5a092 0, #d37261 45%, #b73a28 50%, #cf6a52 100%);
}

.close svg {
    width: 12px;
    height: 12px;
}

.dialog-body {
    border: 1px solid #58728f;
    background: #f0f0f0;
}

.message {
    height: 75px;
    padding: 10px 9px 0;
    background: #fff;
    border-bottom: 1px solid #dfdfdf;
}

.message h3 {
    font-size: 15px;
    line-height: 20px;
    color: #1b3a93;
}

.message p {
    margin-top: 14px;
    font-family: "Noto Sans CJK SC", sans-serif;
    font-size: 11px;
    line-height: 16px;
    white-space: nowrap;
}

.actions {
    display: flex;
    align-items: center;
    gap: 7px;
    height: 41px;
    padding: 0 10px 0 8px;
    border-bottom: 1px solid #dfdfdf;
}

.toggle {
    display: flex;
    align-items: center;
    gap: 5px;
    margin-right: auto;
}

.toggle svg {
    width: 20px;
    height: 20px;
}

.toggle span {
    border: 1px dotted #000;
    line-height: 16px;
}

.btn {
    width: 68px;
    height: 22px;
    line-height: 18px;
    border: 1px solid #707070;
    border-radius: 3px;
    background: linear-gradient(#f3f3f3 0, #ebebeb 48%, #dddddd 52%, #cfcfcf 100%);
    box-shadow: inset 0 0 0 1px #fbfbfb;
}

.details {
    height: 66px;
    padding: 9px;
    border-top: 1px solid #fff;
}

/* 右下角标志 */
.mark {
    position: absolute;
    right: 8px;
    bottom: 10px;
    display: flex;
    align-items: center;
    gap: 3px;
    font-size: 15px;
    font-weight: bold;
    color: #4d4d4f;
}

.mark svg {
    width: 46px;
    height: 36px;
}

.ai {
    font: bold 16px "Open Sans", sans-serif;
    fill: #4d4d4f;
}
```
